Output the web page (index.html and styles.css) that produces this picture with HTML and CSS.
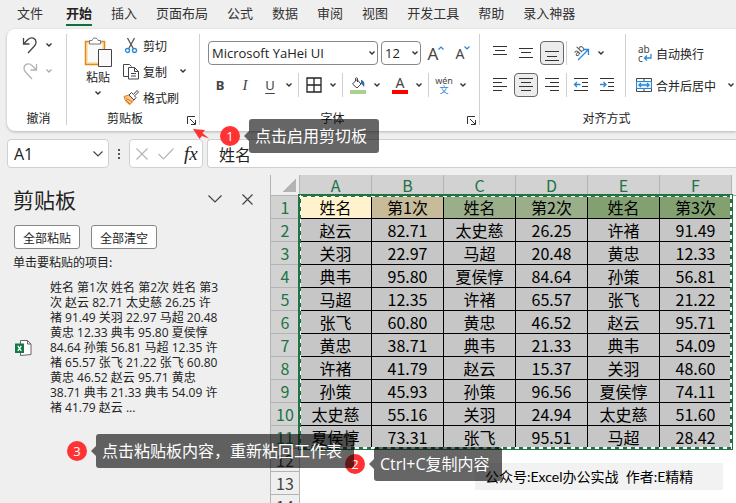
FILE: index.html
```html
<!DOCTYPE html>
<html lang="zh-CN">
<head>
    <meta charset="UTF-8">
    <meta name="viewport" content="width=device-width, initial-scale=1.0">
    <title>Excel 剪贴板</title>
    <link rel="stylesheet" href="styles.css">
</head>
<body>
    <!-- shared icons -->
    <svg class="defs" aria-hidden="true">
        <symbol id="chev" viewBox="0 0 8 8"><path d="M1.5 2.5L4 5L6.5 2.5" fill="none" stroke="#333" stroke-width="1.4"/></symbol>
        <symbol id="launch" viewBox="0 0 9 9"><path d="M.5 8V.5H8M3 3l5 5M8.500 4v4.500H4" fill="none" stroke="#333"/></symbol>
    </svg>

    <nav class="tabs">
        <a href="#">文件</a>
        <a href="#" class="active">开始</a>
        <a href="#">插入</a>
        <a href="#">页面布局</a>
        <a href="#">公式</a>
        <a href="#">数据</a>
        <a href="#">审阅</a>
        <a href="#">视图</a>
        <a href="#">开发工具</a>
        <a href="#">帮助</a>
        <a href="#">录入神器</a>
    </nav>

    <div class="ribbon">
        <section class="group undo-group">
            <div class="stack">
                <div class="row">
                    <button aria-label="撤消"><svg width="16" height="17" viewBox="0 0 16 17" fill="none" stroke="#444" stroke-width="1.3"><path d="M1.500 1v6h6M1.500 7L6 2.500C9-.5 14 1 14 5.500c0 2-1 3-2 4L6 16"/></svg></button>
                    <button aria-label="撤消列表"><svg class="chev"><use href="#chev"/></svg></button>
                </div>
                <div class="row faded">
                    <button aria-label="恢复"><svg width="16" height="17" viewBox="0 0 16 17" fill="none" stroke="#444" stroke-width="1.3"><path d="M14.500 1v6h-6M14.500 7L10 2.500C7-.5 2 1 2 5.500c0 2 1 3 2 4L10 16"/></svg></button>
                    <button aria-label="恢复列表"><svg class="chev"><use href="#chev"/></svg></button>
                </div>
            </div>
            <h2>撤消</h2>
        </section>

        <section class="group clip-group">
            <div class="clip-body">
                <button class="paste">
                    <svg width="28" height="31" viewBox="0 0 28 31"><path d="M1.500 4.500h19v23h-19z" fill="#fbe3b5" stroke="#e08a1e" stroke-width="1.500"/><path d="M4 7h14v18H4z" fill="#fafafa"/><path d="M5.500 7V3.500H8C8.500 1.800 9.500 1 11 1s2.500.8 3 2.500h2.500V7z" fill="#fff" stroke="#777"/><path d="M14.500 12.500h13v17h-13z" fill="#fafafa" stroke="#444"/></svg>
                    <span>粘贴</span>
                    <svg class="chev"><use href="#chev"/></svg>
                </button>
                <div class="stack">
                    <button class="labelled">
                        <svg width="16" height="17" viewBox="0 0 16 17" fill="none"><path d="M4.500 1l6 11M11.500 1l-6 11" stroke="#555" stroke-width="1.3"/><circle cx="4.500" cy="13.500" r="2" stroke="#2b88d8" stroke-width="1.3"/><circle cx="11.500" cy="13.500" r="2" stroke="#2b88d8" stroke-width="1.3"/></svg>
                        剪切
                    </button>
                    <div class="row">
                        <button class="labelled">
                            <svg width="16" height="17" viewBox="0 0 16 17" fill="#fff" stroke="#444"><path d="M5 13.500H.5V1.500h6l2 2"/><path d="M5.500 4.500h6l4 4v7.500h-10zM11.500 4.500v4h4M8 10.500h5M8 13h5"/></svg>
                            复制
                        </button>
                        <button class="copy-more" aria-label="复制选项"><svg class="chev"><use href="#chev"/></svg></button>
                    </div>
                    <button class="labelled">
                        <svg width="16" height="17" viewBox="0 0 16 17"><path d="M1 7.500l5-1.500 5 5-4 4.500c-3-1-5-4-6-8z" fill="#f8c68a" stroke="#e07b1a"/><path d="M3 9.500l6 3M3 11l4 4" stroke="#e07b1a"/><path d="M6 6l2.500-2.500 2 2L14 1.500l1.500 1.500-4 4 1.500 1.500L11 11z" fill="#fff" stroke="#444"/></svg>
                        格式刷
                    </button>
                </div>
            </div>
            <h2>剪贴板</h2>
            <button class="launcher" aria-label="启用剪贴板"><svg width="9" height="9"><use href="#launch"/></svg></button>
        </section>

        <section class="group font-group">
            <div class="rows">
                <div class="row combos">
                    <div class="combo font-name">
                        <select aria-label="字体"><option>Microsoft YaHei UI</option></select>
                        <svg class="chev"><use href="#chev"/></svg>
                    </div>
                    <div class="combo font-size">
                        <select aria-label="字号"><option>12</option></select>
                        <svg class="chev"><use href="#chev"/></svg>
                    </div>
                    <button class="tool grow" aria-label="增大字号">A<svg width="6" height="4" viewBox="0 0 6 4"><path d="M.5 3.500L3 1l2.500 2.500" fill="none" stroke="#2b88d8" stroke-width="1.2"/></svg></button>
                    <button class="tool shrink" aria-label="减小字号">A<svg width="6" height="4" viewBox="0 0 6 4"><path d="M.5.5L3 3 5.500.5" fill="none" stroke="#2b88d8" stroke-width="1.2"/></svg></button>
                </div>
                <div class="row tools">
                    <button class="tool"><b>B</b></button>
                    <button class="tool"><i>I</i></button>
                    <button class="tool"><u>U</u></button>
                    <button class="more" aria-label="下划线"><svg class="chev"><use href="#chev"/></svg></button>
                    <span class="sep"></span>
                    <button class="tool" aria-label="边框"><svg width="16" height="16" viewBox="0 0 16 16"><path d="M1 1h14v14H1zM8 1v14M1 8h14" fill="none" stroke="#222" stroke-width="1.3"/></svg></button>
                    <button class="more" aria-label="边框列表"><svg class="chev"><use href="#chev"/></svg></button>
                    <span class="sep"></span>
                    <button class="tool" aria-label="填充颜色"><svg width="16" height="17" viewBox="0 0 16 17"><path d="M2.500 7L7 2.500 11 7l-4 4zM5.500 4V1.500c0-1 2-1 2 0V5" fill="#fff" stroke="#444"/><path d="M11 3c3 .5 4 3 3 7-1-1-1.500-3-3-3z" fill="#2b6ca8"/><path d="M0 13h16v4H0z" fill="#a9d08e"/></svg></button>
                    <button class="more" aria-label="填充颜色列表"><svg class="chev"><use href="#chev"/></svg></button>
                    <button class="tool font-color" aria-label="字体颜色"><span>A</span></button>
                    <button class="more" aria-label="字体颜色列表"><svg class="chev"><use href="#chev"/></svg></button>
                    <span class="sep"></span>
                    <button class="tool pinyin"><span>wén</span><em>文</em></button>
                    <button class="more" aria-label="拼音"><svg class="chev"><use href="#chev"/></svg></button>
                </div>
            </div>
            <h2>字体</h2>
            <button class="launcher" aria-label="字体设置"><svg width="9" height="9"><use href="#launch"/></svg></button>
        </section>

        <section class="group align-group">
            <div class="align-body">
                <div class="rows">
                    <div class="row aligns">
                        <button class="tool" aria-label="顶端对齐"><svg width="14" height="14" viewBox="0 0 14 14"><path d="M0 .5h14M2 4.500h10M0 8.500h14"/></svg></button>
                        <button class="tool" aria-label="垂直居中"><svg width="14" height="14" viewBox="0 0 14 14"><path d="M0 2.500h14M2 6.500h10M0 11.500h14"/></svg></button>
                        <button class="tool on" aria-label="底端对齐"><svg width="14" height="14" viewBox="0 0 14 14"><path d="M0 5.500h14M2 10.500h10M0 14.500h14"/></svg></button>
                        <span class="sep"></span>
                        <button class="tool" aria-label="方向"><svg width="18" height="18" viewBox="0 0 18 18"><text transform="translate(5 13) rotate(-45)" class="ab">ab</text><path class="blue" d="M6 16L16 6M11 5.500h5.500V11"/></svg></button>
                        <button class="more" aria-label="方向列表"><svg class="chev"><use href="#chev"/></svg></button>
                    </div>
                    <div class="row aligns">
                        <button class="tool" aria-label="左对齐"><svg width="14" height="14" viewBox="0 0 14 14"><path d="M0 .5h14M0 4.500h9M0 8.500h14M0 12.500h9"/></svg></button>
                        <button class="tool on" aria-label="居中"><svg width="14" height="14" viewBox="0 0 14 14"><path d="M0 .5h14M2 4.500h10M0 8.500h14M2 12.500h10"/></svg></button>
                        <button class="tool" aria-label="右对齐"><svg width="14" height="14" viewBox="0 0 14 14"><path d="M0 .5h14M5 4.500h9M0 8.500h14M5 12.500h9"/></svg></button>
                        <span class="sep"></span>
                        <button class="tool" aria-label="减少缩进"><svg width="14" height="14" viewBox="0 0 14 14"><path d="M0 .5h14M8 4.500h6M8 8.500h6M0 12.500h14"/><path class="blue" d="M6.500 6.500H.5M3 4L.5 6.500 3 9"/></svg></button>
                        <button class="tool" aria-label="增加缩进"><svg width="14" height="14" viewBox="0 0 14 14"><path d="M0 .5h14M8 4.500h6M8 8.500h6M0 12.500h14"/><path class="blue" d="M0 6.500h6M3.500 4L6 6.500 3.500 9"/></svg></button>
                    </div>
                </div>
                <div class="rows wrap-rows">
                    <button class="labelled">
                        <svg class="wrap-icon" width="16" height="17" viewBox="0 0 16 17"><text x="2" y="8" class="ab">ab</text><text x="2" y="17" class="ab">c</text><path class="blue" d="M15 9v4H8.500M11 10.500L8.500 13l2.500 2.500"/></svg>
                        自动换行
                    </button>
                    <div class="row">
                        <button class="labelled">
                            <svg width="16" height="16" viewBox="0 0 16 16"><path d="M.5 1.500h15v13H.5z" fill="#fff" stroke="#444"/><path d="M8 1v3M8 12v3" stroke="#444"/><path d="M.5 4.500h15v7H.5z" fill="#e3f1fb" stroke="#2b88d8"/><path class="blue" d="M3 8h10M5 6L3 8l2 2M11 6l2 2-2 2"/></svg>
                            合并后居中
                        </button>
                        <button class="merge-more" aria-label="合并选项"><svg class="chev"><use href="#chev"/></svg></button>
                    </div>
                </div>
            </div>
            <h2>对齐方式</h2>
        </section>
    </div>

    <div class="formula-bar">
        <div class="name-box">
            <input type="text" value="A1" aria-label="名称框">
            <svg width="10" height="6" viewBox="0 0 10 6"><path d="M.5.5L5 5 9.500.5" fill="none" stroke="#444" stroke-width="1.2"/></svg>
        </div>
        <span class="dots"></span>
        <div class="fx-box">
            <button aria-label="取消"><svg width="12" height="12" viewBox="0 0 12 12"><path d="M.5.5l11 11M11.500.5l-11 11" fill="none" stroke="#b5b5b5" stroke-width="1.2"/></svg></button>
            <button aria-label="输入"><svg width="16" height="12" viewBox="0 0 16 12"><path d="M.5 6L5.500 11 15.500.5" fill="none" stroke="#b5b5b5" stroke-width="1.2"/></svg></button>
            <button class="fx">fx</button>
        </div>
        <input class="formula" type="text" value="姓名" aria-label="编辑栏">
    </div>

    <main class="workspace">
        <aside class="panel">
            <header>
                <h1>剪贴板</h1>
                <button aria-label="任务窗格选项"><svg width="14" height="8" viewBox="0 0 14 8"><path d="M.5.5L7 7 13.500.5" fill="none" stroke="#444" stroke-width="1.2"/></svg></button>
                <button aria-label="关闭"><svg width="11" height="11" viewBox="0 0 11 11"><path d="M.5.5l10 10M10.500.5l-10 10" fill="none" stroke="#444" stroke-width="1.2"/></svg></button>
            </header>
            <div class="panel-buttons">
                <button>全部粘贴</button>
                <button>全部清空</button>
            </div>
            <p class="hint">单击要粘贴的项目:</p>
            <div class="clip-item">
                <svg width="17" height="16" viewBox="0 0 17 16"><path d="M5.500.5h7l3.500 3.500v10.500L5.500 15.500z" fill="#fff" stroke="#666"/><path d="M12.500.5v3.500H16" fill="none" stroke="#666"/><path d="M0 3.500h9v9.500H0z" fill="#107c41"/><path d="M2.800 5.800l3.500 5M6.300 5.800l-3.500 5" stroke="#fff" stroke-width="1.3"/></svg>
                <p>姓名 第1次 姓名 第2次 姓名 第3次 赵云 82.71 太史慈 26.25 许褚 91.49 关羽 22.97 马超 20.48 黄忠 12.33 典韦 95.80 夏侯惇 84.64 孙策 56.81 马超 12.35 许褚 65.57 张飞 21.22 张飞 60.80 黄忠 46.52 赵云 95.71 黄忠 38.71 典韦 21.33 典韦 54.09 许褚 41.79 赵云 ...</p>
            </div>
        </aside>

        <div class="sheet">
            <table>
                <colgroup><col class="num"><col><col><col><col><col><col></colgroup>
                <thead>
                    <tr><th class="corner"></th><th>A</th><th>B</th><th>C</th><th>D</th><th>E</th><th>F</th></tr>
                </thead>
                <tbody>
                    <tr><th>1</th><td class="cream">姓名</td><td class="tan">第1次</td><td class="sage">姓名</td><td class="sage">第2次</td><td class="green">姓名</td><td class="green">第3次</td></tr>
                    <tr><th>2</th><td>赵云</td><td>82.71</td><td>太史慈</td><td>26.25</td><td>许褚</td><td>91.49</td></tr>
                    <tr><th>3</th><td>关羽</td><td>22.97</td><td>马超</td><td>20.48</td><td>黄忠</td><td>12.33</td></tr>
                    <tr><th>4</th><td>典韦</td><td>95.80</td><td>夏侯惇</td><td>84.64</td><td>孙策</td><td>56.81</td></tr>
                    <tr><th>5</th><td>马超</td><td>12.35</td><td>许褚</td><td>65.57</td><td>张飞</td><td>21.22</td></tr>
                    <tr><th>6</th><td>张飞</td><td>60.80</td><td>黄忠</td><td>46.52</td><td>赵云</td><td>95.71</td></tr>
                    <tr><th>7</th><td>黄忠</td><td>38.71</td><td>典韦</td><td>21.33</td><td>典韦</td><td>54.09</td></tr>
                    <tr><th>8</th><td>许褚</td><td>41.79</td><td>赵云</td><td>15.37</td><td>关羽</td><td>48.60</td></tr>
                    <tr><th>9</th><td>孙策</td><td>45.93</td><td>孙策</td><td>96.56</td><td>夏侯惇</td><td>74.11</td></tr>
                    <tr><th>10</th><td>太史慈</td><td>55.16</td><td>关羽</td><td>24.94</td><td>太史慈</td><td>51.60</td></tr>
                    <tr><th>11</th><td>夏侯惇</td><td>73.31</td><td>张飞</td><td>95.51</td><td>马超</td><td>28.42</td></tr>
                </tbody>
                <tfoot>
                    <tr><th>12</th><td colspan="6"></td></tr>
                    <tr><th>13</th><td colspan="6"></td></tr>
                    <tr><th>14</th><td colspan="6"></td></tr>
                </tfoot>
            </table>
            <div class="ants"></div>
            <div class="credit">公众号:Excel办公实战&nbsp; 作者:E精精</div>
        </div>
    </main>

    <!-- numbered steps -->
    <svg class="arrow" width="17" height="12" viewBox="0 0 17 12"><path d="M0 0L12 1 9.500 4 16 9.500 9 7 6.500 10z" fill="#ff3333"/></svg>
    <div class="step step-2"><b>2</b><span>Ctrl+C复制内容</span></div>
    <div class="step step-1"><b>1</b><span>点击启用剪切板</span></div>
    <div class="step step-3"><b>3</b><span>点击粘贴板内容，重新粘回工作表</span></div>
</body>
</html>
```

FILE: styles.css
```css
* {
    box-sizing: border-box;
}
body {
    position: relative;
    display: flex;
    flex-direction: column;
    height: 100vh;
    margin: 0;
    overflow: hidden;
    background-color: #efefef;
    color: #222;
    font-family: "Noto Sans CJK SC", sans-serif;
    font-size: 12px;
}
h1, h2, p {
    margin: 0;
    font-weight: normal;
}
button, input, select {
    margin: 0;
    padding: 0;
    border: 0;
    background: none;
    color: inherit;
    font: inherit;
}
button {
    display: flex;
    align-items: center;
    justify-content: center;
    white-space: nowrap;
}
svg {
    display: block;
    flex: none;
}
.defs {
    position: absolute;
    width: 0;
    height: 0;
}
.chev {
    width: 8px;
    height: 8px;
}

/* Tabs */
.tabs {
    display: flex;
    flex: none;
    gap: 19px;
    height: 29px;
    padding: 1px 17px 0;
}
.tabs a {
    height: 25px;
    color: #333;
    font-size: 13px;
    line-height: 24px;
    text-decoration: none;
    white-space: nowrap;
}
.tabs a:first-child {
    margin-right: 4px;
}
.tabs .active {
    border-bottom: 2px solid #0f7039;
    color: #222;
    font-weight: bold;
}

/* Ribbon */
.ribbon {
    display: flex;
    flex: none;
    height: 102px;
    margin-left: 7px;
    padding: 5px 0 6px;
    border-radius: 8px 0 0 8px;
    background-color: #fff;
    box-shadow: 0 1px 3px rgba(0, 0, 0, 0.25);
}
.group {
    position: relative;
    display: flex;
    flex: none;
    flex-direction: column;
    justify-content: space-between;
    border-right: 1px solid #d0d0d0;
}
.group h2 {
    font-size: 12px;
    line-height: 14px;
    text-align: center;
}
.undo-group {
    width: 60px;
    padding-left: 4px;
}
.clip-group {
    width: 133px;
}
.clip-group h2 {
    padding-right: 16px;
}
.font-group {
    width: 280px;
    padding-left: 8px;
}
.font-group h2 {
    padding-right: 22px;
}
.align-group {
    width: 253px;
    border-right: 0;
}
.row {
    display: flex;
    align-items: center;
}
.stack {
    display: flex;
    flex-direction: column;
    gap: 4px;
    align-items: flex-start;
}
.stack > * {
    height: 22px;
}
.undo-group .stack {
    padding-left: 11px;
}
.undo-group .row {
    gap: 7px;
}
.faded {
    opacity: 0.4;
}
.clip-body {
    display: flex;
    align-items: flex-start;
    gap: 11px;
    padding-left: 17px;
}
.paste {
    flex-direction: column;
    padding-top: 3px;
    line-height: 18px;
}
.paste .chev {
    margin-top: 3px;
}
.labelled {
    gap: 4px;
}
.copy-more {
    margin-left: 12px;
}
.launcher {
    position: absolute;
    right: 3px;
    bottom: 0;
}
.rows {
    display: flex;
    flex-direction: column;
    gap: 8px;
    padding-top: 7px;
}
.rows > * {
    height: 24px;
}
.combos {
    gap: 3px;
}
.combo {
    position: relative;
}
.combo select {
    width: 100%;
    height: 24px;
    padding: 0 3px;
    border: 1px solid #888;
    border-radius: 4px;
    font-family: "Open Sans", sans-serif;
    font-size: 13px;
    appearance: none;
}
.combo .chev {
    position: absolute;
    top: 8px;
    right: 2px;
}
.font-name {
    width: 170px;
}
.font-size {
    width: 40px;
}
.tools {
    gap: 1px;
}
.tool {
    width: 24px;
    height: 24px;
    color: #444;
    font-family: "Noto Sans", sans-serif;
    font-size: 13px;
}
.tool i {
    font-family: "Liberation Serif", serif;
    font-size: 15px;
}
.tool u {
    text-underline-offset: 3px;
}
.more {
    width: 12px;
    height: 24px;
}
.more + .tool {
    margin-left: 4px;
}
.sep {
    width: 1px;
    height: 24px;
    margin: 0 2px;
    background-color: #d0d0d0;
}
.grow {
    font-size: 17px;
}
.shrink {
    font-size: 14px;
}
.grow svg, .shrink svg {
    align-self: flex-start;
    margin-top: 5px;
}
.font-color span {
    width: 16px;
    height: 17px;
    border-bottom: 4px solid #f00;
    font-size: 14px;
    line-height: 12px;
}
.pinyin {
    flex-direction: column;
}
.pinyin span {
    font-size: 9px;
    line-height: 9px;
}
.pinyin em {
    color: #2b88d8;
    font-family: "Noto Sans CJK SC", sans-serif;
    font-size: 9px;
    font-style: normal;
    line-height: 9px;
}
.align-body {
    display: flex;
    padding-left: 8px;
}
.aligns {
    gap: 2px;
}
.aligns .sep {
    margin: 0;
}
.aligns svg, .wrap-icon {
    overflow: visible;
}
.aligns .tool path {
    fill: none;
    stroke: #333;
}
.tool.on {
    border: 1px solid #666;
    border-radius: 4px;
    background-color: #ececec;
}
.aligns .tool .blue, .blue {
    fill: none;
    stroke: #2b88d8;
    stroke-width: 1.3;
}
.ab {
    fill: #444;
    font-family: "Noto Sans", sans-serif;
    font-size: 10px;
}
.wrap-rows {
    align-items: flex-start;
    margin-left: 6px;
    padding-left: 10px;
    border-left: 1px solid #d0d0d0;
}
.align-body .rows:first-child {
    width: 131px;
}
.merge-more {
    margin-left: 11px;
}

/* Formula bar */
.formula-bar {
    display: flex;
    flex: none;
    height: 29px;
    margin: 8px 0 7px 7px;
    font-size: 16px;
}
.name-box, .fx-box, .formula {
    border: 1px solid #d0d0d0;
    border-radius: 4px;
    background-color: #fff;
}
.name-box {
    display: flex;
    align-items: center;
    width: 102px;
    padding: 0 5px 0 6px;
}
.name-box input {
    flex: 1;
    min-width: 0;
    font-family: "Open Sans", sans-serif;
}
.dots {
    align-self: center;
    width: 2px;
    height: 10px;
    margin: 0 9px;
    background: repeating-linear-gradient(#555 0 2px, transparent 2px 4px);
}
.fx-box {
    display: flex;
    gap: 10px;
    width: 74px;
    padding: 0 5px 0 6px;
}
.fx {
    font-family: "Liberation Serif", serif;
    font-size: 19px;
    font-style: italic;
}
.formula {
    flex: 1;
    min-width: 0;
    margin-left: 4px;
    padding: 0 11px;
    border-right: 0;
    border-radius: 4px 0 0 4px;
}

/* Clipboard pane */
.workspace {
    display: flex;
    flex: 1;
    min-height: 0;
}
.panel {
    flex: none;
    width: 270px;
    padding: 7px 17px 0 13px;
}
.panel header {
    display: flex;
    align-items: center;
    gap: 20px;
    height: 34px;
}
.panel h1 {
    flex: 1;
    font-size: 21px;
    line-height: 34px;
}
.panel-buttons {
    display: flex;
    gap: 11px;
    padding: 9px 1px 0;
}
.panel-buttons button {
    width: 66px;
    height: 24px;
    border: 1px solid #888;
    border-radius: 3px;
    background-color: #fff;
}
.hint {
    padding-top: 4px;
    line-height: 18px;
}
.clip-item {
    display: flex;
    align-items: center;
    gap: 18px;
    padding: 9px 0 0 2px;
}
.clip-item p {
    width: 172px;
    font-family: "Open Sans", "Noto Sans CJK SC", sans-serif;
    line-height: 15px;
}

/* Sheet */
.sheet {
    position: relative;
    flex: 1;
    min-width: 0;
    overflow: hidden;
    background: linear-gradient(#efefef 20px, #a0a0a0 20px 21px, #fff 21px);
}
table {
    width: 462px;
    border-spacing: 0;
    table-layout: fixed;
    color: #000;
    font-size: 16px;
    line-height: 20px;
    text-align: center;
}
.num {
    width: 30px;
}
th, td {
    height: 23px;
    padding: 0;
    border: 0 solid #b4b4b4;
    border-width: 0 1px 1px 0;
    white-space: nowrap;
}
th {
    background-color: #d2d2d2;
    color: #217346;
    font-weight: normal;
}
th:first-child {
    border-left-width: 1px;
}
thead th {
    height: 21px;
}
thead .corner {
    background: linear-gradient(135deg, transparent 50%, #b4b4b4 50%) 12px 4px / 13px 13px no-repeat #efefef;
}
tbody td {
    border-color: #000;
    background-color: #c6c6c6;
}
tfoot th {
    background-color: #efefef;
    color: #444;
}
tfoot td {
    border: 0;
}
td.cream {
    background-color: #fff2cc;
}
td.tan {
    background-color: #c7bb99;
}
td.sage {
    background-color: #9aae8a;
}
td.green {
    background-color: #82a070;
}
/* copy outline: white dashes running over a green frame */
.ants {
    position: absolute;
    top: 19px;
    left: 28px;
    width: 435px;
    height: 256px;
    border: 3px solid #217346;
}
.ants::before {
    content: "";
    position: absolute;
    inset: -2px;
    background:
        repeating-linear-gradient(90deg, #fff 0 4px, transparent 4px 8px) 0 1px / 100% 1px no-repeat,
        repeating-linear-gradient(90deg, #fff 0 4px, transparent 4px 8px) 0 100% / 100% 2px no-repeat,
        repeating-linear-gradient(#fff 0 4px, transparent 4px 8px) 1px 0 / 1px 100% no-repeat,
        repeating-linear-gradient(#fff 0 4px, transparent 4px 8px) 100% 0 / 2px 100% no-repeat;
}
.credit {
    position: absolute;
    top: 288px;
    left: 205px;
    width: 248px;
    padding-left: 10px;
    background-color: #f2f2f2;
    color: #000;
    font-family: Lato, "Noto Sans CJK SC", sans-serif;
    font-size: 14px;
    line-height: 27px;
    white-space: nowrap;
}

/* Numbered steps */
.arrow {
    position: absolute;
    top: 129px;
    left: 193px;
}
.step {
    position: absolute;
    display: flex;
    align-items: center;
    gap: 9px;
    color: #fff;
}
.step b {
    width: 20px;
    height: 20px;
    border-radius: 50%;
    background-color: #ff3333;
    font-family: "Open Sans", sans-serif;
    font-size: 13px;
    font-weight: normal;
    line-height: 20px;
    text-align: center;
}
.step span {
    position: relative;
    padding: 0 12px 0 6px;
    border-radius: 3px;
    background-color: rgba(0, 0, 0, 0.6);
    font-family: "Open Sans", "Noto Sans CJK SC", sans-serif;
    font-size: 16px;
    line-height: 34px;
    white-space: nowrap;
}
.step span::before {
    content: "";
    position: absolute;
    top: 12px;
    left: -5px;
    border: 5px solid transparent;
    border-left-width: 0;
    border-right-color: rgba(0, 0, 0, 0.6);
}
.step-1 {
    top: 119px;
    left: 220px;
}
.step-2 {
    top: 447px;
    left: 345px;
}
.step-3 {
    top: 434px;
    left: 67px;
}
```
